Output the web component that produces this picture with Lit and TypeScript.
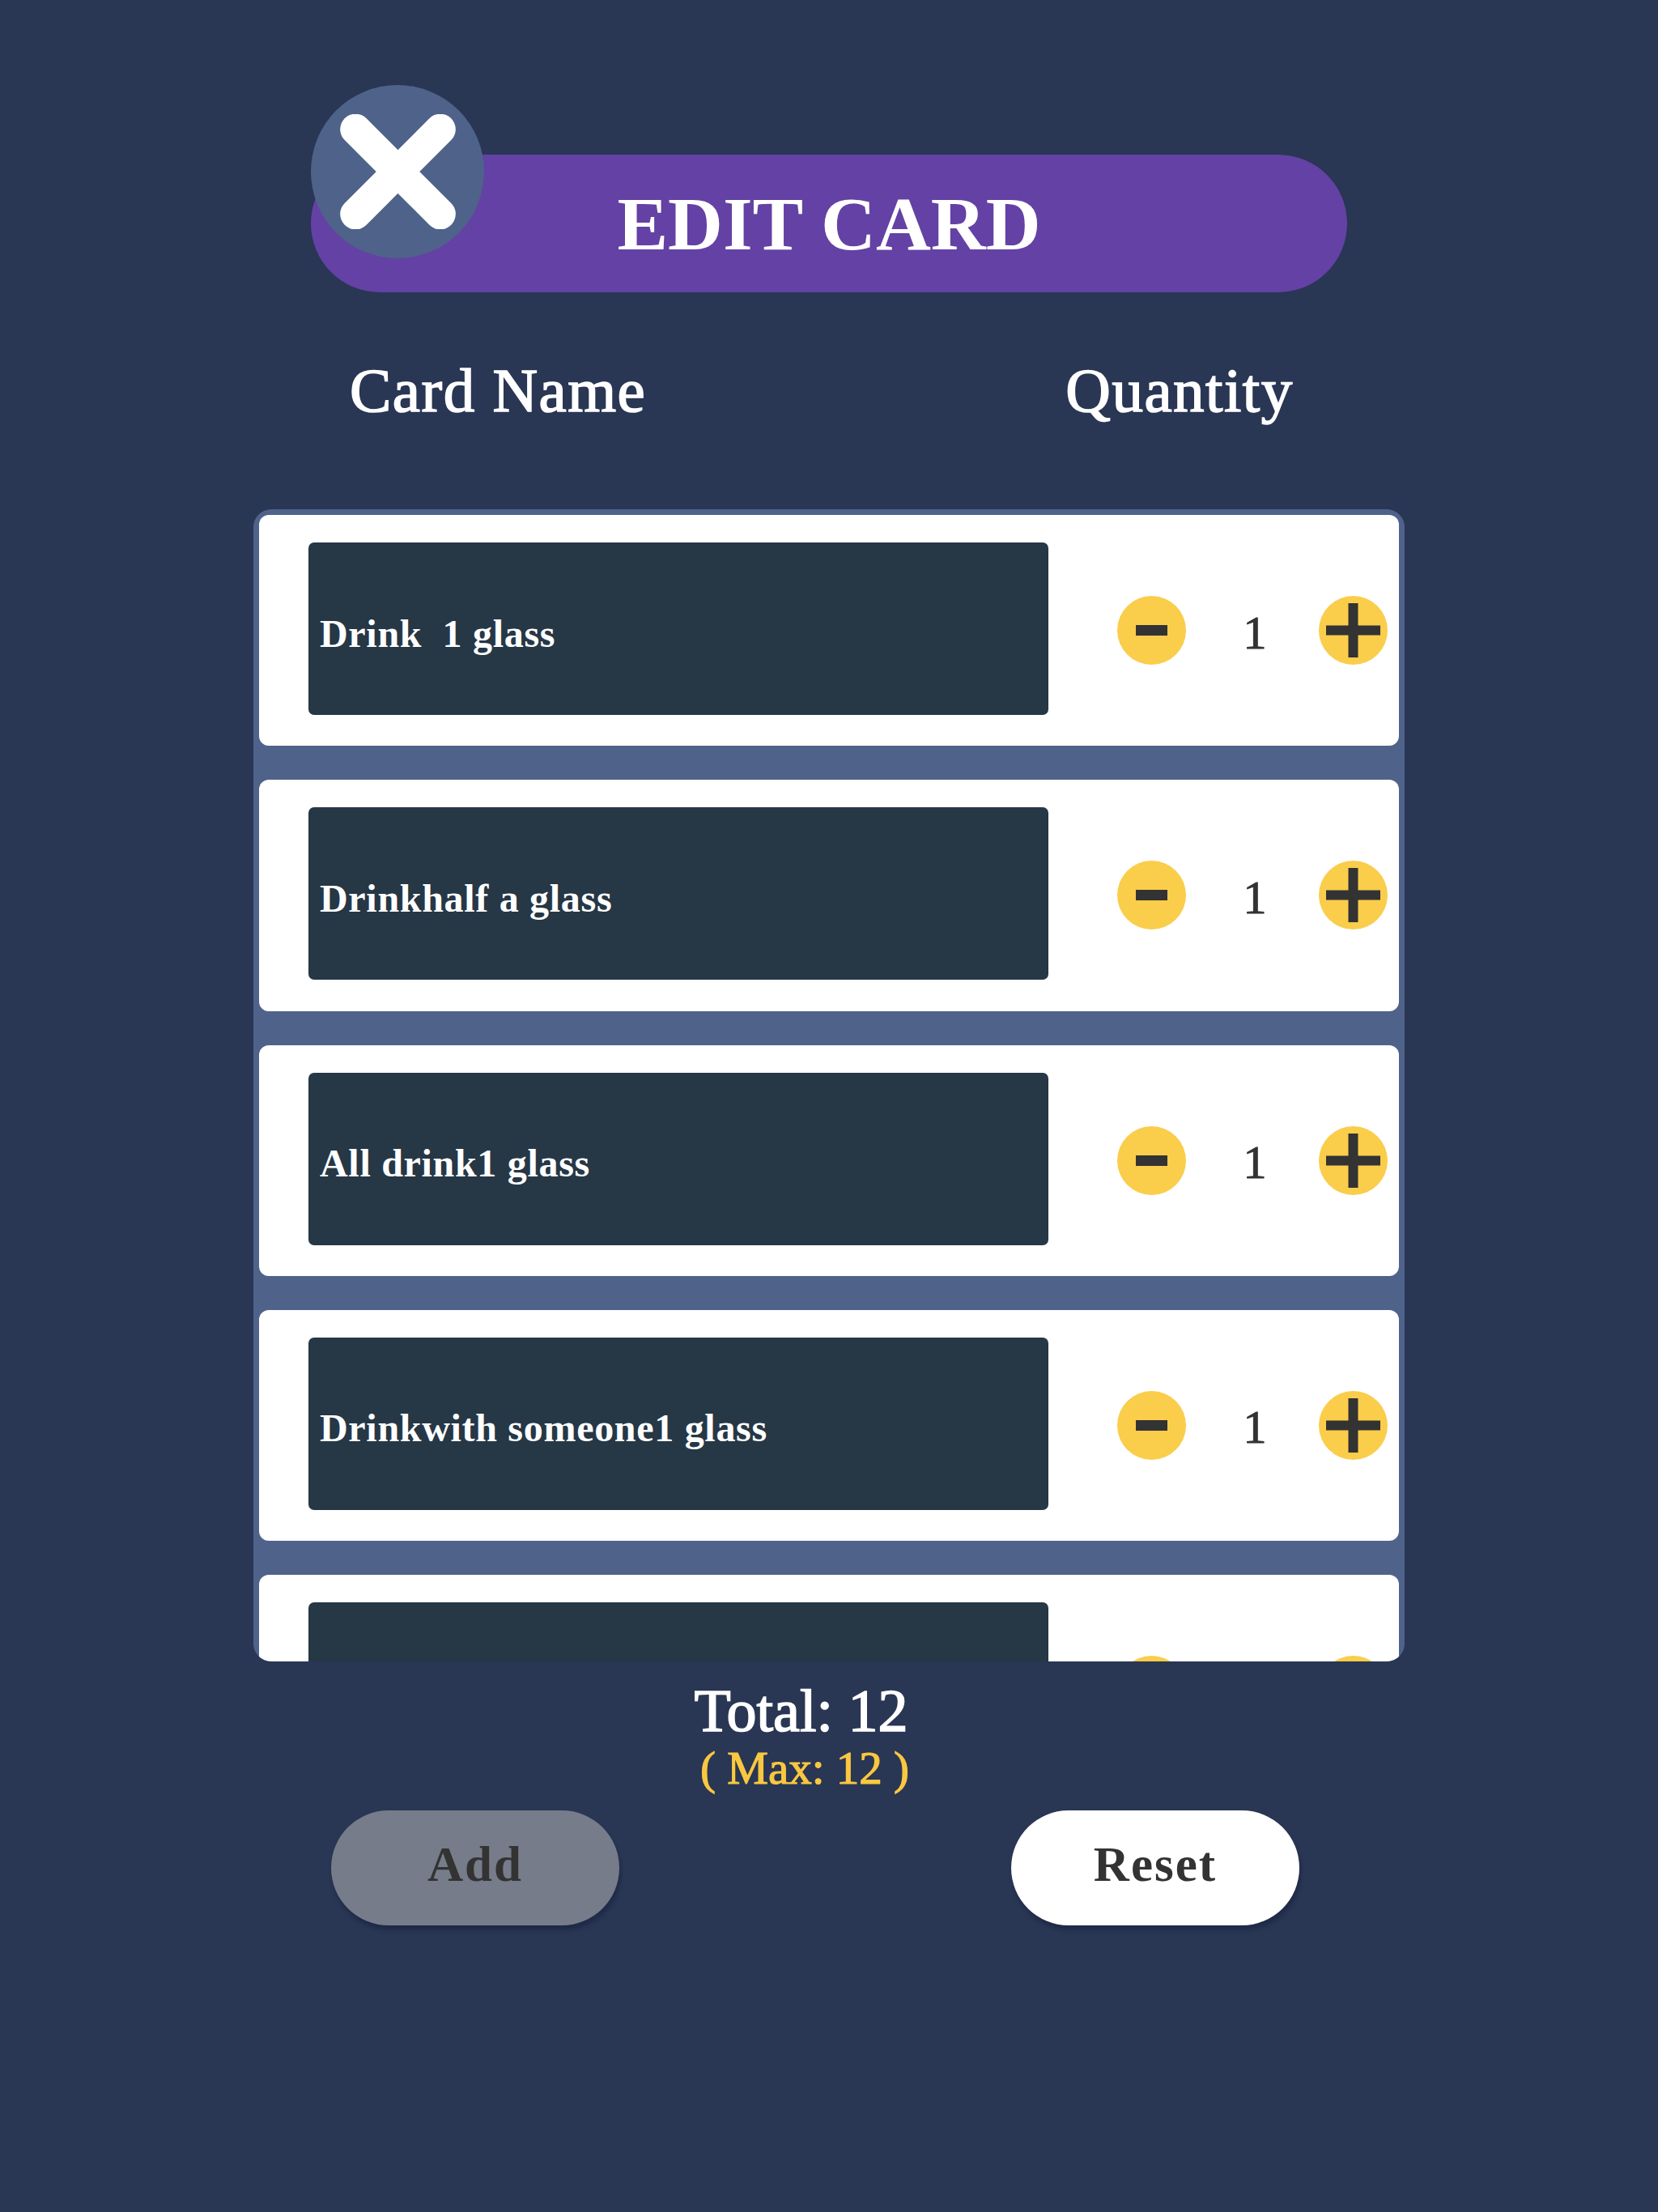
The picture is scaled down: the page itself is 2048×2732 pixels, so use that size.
import { LitElement, html, css } from "lit";
import { customElement } from "lit/decorators.js";

const ROWS = ["Drink\u00a0\u00a01 glass", "Drinkhalf a glass", "All drink1 glass", "Drinkwith someone1 glass", ""];

@customElement("app-root")
export class AppRoot extends LitElement {
  static styles = css`
    :host {
      display: block;
      width: 2048px;
      height: 2732px;
      background: #293654;
      overflow: hidden;
      font-family: "Liberation Serif", serif;
      color: #fff;
    }
    .page {
      display: flex;
      flex-direction: column;
      padding-top: 191px;
    }
    .banner {
      position: relative;
      margin-left: 384px;
      width: 1280px;
      height: 170px;
      border-radius: 85px;
      background: #6441a4;
      display: flex;
      align-items: center;
      justify-content: center;
      font-size: 94px;
      font-weight: 700;
      line-height: 1;
    }
    .close {
      position: absolute;
      left: 0;
      top: -86px;
      width: 214px;
      height: 214px;
      border-radius: 50%;
      background: #4f628a;
      display: flex;
      align-items: center;
      justify-content: center;
    }
    .close svg { display: block; }
    .heads {
      display: flex;
      margin-top: 76px;
      height: 90px;
      padding-left: 432px;
      font-size: 77px;
      line-height: 90px;
      letter-spacing: 1.5px;
      -webkit-text-stroke: 1.6px #fff;
    }
    .heads .q { margin-left: 518px; }
    .list {
      margin-top: 102px;
      margin-left: 313px;
      width: 1422px;
      height: 1423px;
      box-sizing: border-box;
      padding: 7px 7px 0;
      background: #4f628a;
      border-radius: 22px;
      overflow: hidden;
      display: flex;
      flex-direction: column;
      gap: 42px;
    }
    .card {
      flex: none;
      height: 285.25px;
      box-sizing: border-box;
      background: #fff;
      border-radius: 12px;
      display: flex;
      align-items: center;
      padding-left: 61px;
    }
    .name {
      width: 914px;
      height: 213px;
      margin-top: -4px;
      border-radius: 7px;
      background: #263746;
      box-sizing: border-box;
      padding: 11px 0 0 14px;
      display: flex;
      align-items: center;
      font-size: 48px;
      font-weight: 700;
      letter-spacing: 0.7px;
      white-space: nowrap;
    }
    .btn {
      flex: none;
      width: 85px;
      height: 85px;
      border-radius: 50%;
      background: #facd4b;
      display: flex;
      align-items: center;
      justify-content: center;
    }
    .btn.minus { margin-left: 85px; }
    .btn svg { display: block; }
    .count {
      width: 164px;
      text-align: center;
      color: #333;
      font-size: 58px;
      line-height: 1;
      padding: 6px 0 0 6px;
      box-sizing: border-box;
      -webkit-text-stroke: 1px #333;
    }
    .totals {
      margin-top: 19px;
      display: flex;
      flex-direction: column;
      align-items: center;
      margin-right: 69px;
    }
    .total {
      font-size: 74px;
      line-height: 84px;
      -webkit-text-stroke: 1.6px #fff;
    }
    .max {
      font-size: 57px;
      line-height: 58px;
      margin-left: 9px;
      color: #f9c840;
      -webkit-text-stroke: 1.2px #f9c840;
    }
    .actions {
      display: flex;
      margin-top: 23px;
      margin-left: 409px;
      gap: 484px;
    }
    .action {
      width: 356px;
      height: 142px;
      box-sizing: border-box;
      padding-bottom: 8px;
      border-radius: 71px;
      background: #fff;
      color: #333;
      display: flex;
      align-items: center;
      justify-content: center;
      font-size: 61px;
      font-weight: 700;
      letter-spacing: 2px;
      box-shadow: 2px 6px 4px rgba(30, 40, 70, 0.8);
    }
    .action.off { background: #767c8a; }
  `;

  private row(label: string) {
    return html`<div class="card">
      <div class="name">${label}</div>
      <div class="btn minus">
        <svg width="39" height="13" viewBox="0 0 39 13"><rect width="39" height="13" fill="#333"></rect></svg>
      </div>
      <div class="count">1</div>
      <div class="btn">
        <svg width="67" height="67" viewBox="0 0 67 67">
          <rect x="0" y="27.5" width="67" height="12" fill="#333"></rect>
          <rect x="27.5" y="0" width="12" height="67" fill="#333"></rect>
        </svg>
      </div>
    </div>`;
  }

  render() {
    return html`<div class="page">
      <div class="banner">
        EDIT CARD
        <div class="close">
          <svg width="143" height="142" viewBox="0 0 143 142">
            <g fill="#fff" transform="translate(71.5 71)">
              <rect x="-93" y="-19" width="186" height="38" rx="19" transform="rotate(45)"></rect>
              <rect x="-93" y="-19" width="186" height="38" rx="19" transform="rotate(-45)"></rect>
            </g>
          </svg>
        </div>
      </div>
      <div class="heads"><span>Card Name</span><span class="q">Quantity</span></div>
      <div class="list">${ROWS.map((r) => this.row(r))}</div>
      <div class="totals">
        <div class="total">Total: 12</div>
        <div class="max">( Max: 12 )</div>
      </div>
      <div class="actions">
        <div class="action off">Add</div>
        <div class="action">Reset</div>
      </div>
    </div>`;
  }
}
